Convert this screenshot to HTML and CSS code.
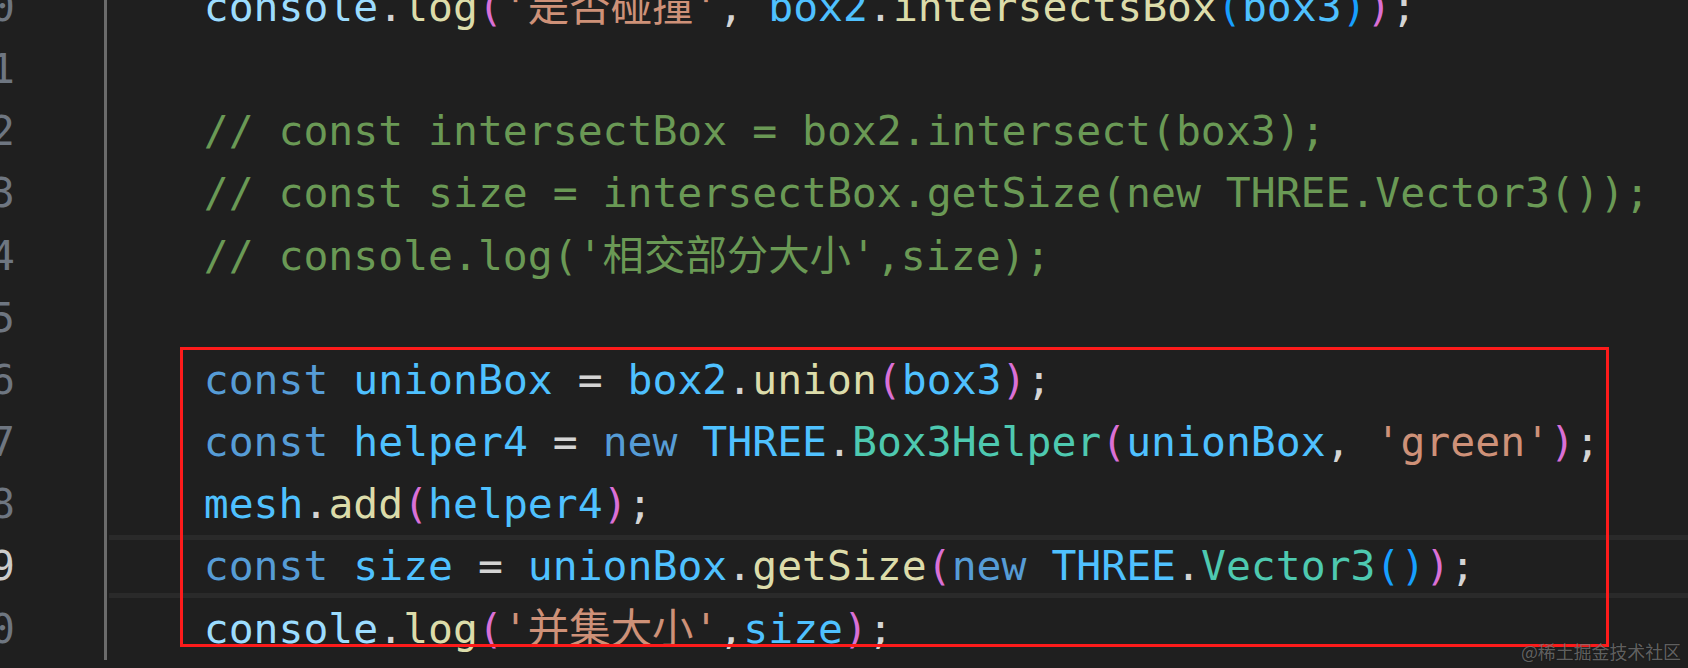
FILE: index.html
```html
<!DOCTYPE html>
<html lang="zh-CN">
<head>
<meta charset="utf-8">
<title>editor</title>
<link rel="stylesheet" href="styles.css">
</head>
<body>
<div class="editor">
  <div class="gutter">
    <div class="ln">10</div>
    <div class="ln">11</div>
    <div class="ln">12</div>
    <div class="ln">13</div>
    <div class="ln">14</div>
    <div class="ln">15</div>
    <div class="ln">16</div>
    <div class="ln">17</div>
    <div class="ln">18</div>
    <div class="ln ln-cur">19</div>
    <div class="ln">20</div>
  </div>
  <div class="code">
    <div class="line">    <span class="v">console</span><span class="p">.</span><span class="f">log</span><span class="b2">(</span><span class="s">'是否碰撞'</span><span class="p">, </span><span class="c">box2</span><span class="p">.</span><span class="f">intersectsBox</span><span class="b3">(</span><span class="c">box3</span><span class="b3">)</span><span class="b2">)</span><span class="p">;</span></div>
    <div class="line"> </div>
    <div class="line cm">    // const intersectBox = box2.intersect(box3);</div>
    <div class="line cm">    // const size = intersectBox.getSize(new THREE.Vector3());</div>
    <div class="line cm">    // console.log('相交部分大小',size);</div>
    <div class="line"> </div>
    <div class="line">    <span class="k">const</span> <span class="c">unionBox</span><span class="p"> = </span><span class="c">box2</span><span class="p">.</span><span class="f">union</span><span class="b2">(</span><span class="c">box3</span><span class="b2">)</span><span class="p">;</span></div>
    <div class="line">    <span class="k">const</span> <span class="c">helper4</span><span class="p"> = </span><span class="k">new</span> <span class="c">THREE</span><span class="p">.</span><span class="t">Box3Helper</span><span class="b2">(</span><span class="c">unionBox</span><span class="p">, </span><span class="s">'green'</span><span class="b2">)</span><span class="p">;</span></div>
    <div class="line">    <span class="c">mesh</span><span class="p">.</span><span class="f">add</span><span class="b2">(</span><span class="c">helper4</span><span class="b2">)</span><span class="p">;</span></div>
    <div class="line line-cur">    <span class="k">const</span> <span class="c">size</span><span class="p"> = </span><span class="c">unionBox</span><span class="p">.</span><span class="f">getSize</span><span class="b2">(</span><span class="k">new</span> <span class="c">THREE</span><span class="p">.</span><span class="t">Vector3</span><span class="b3">()</span><span class="b2">)</span><span class="p">;</span></div>
    <div class="line">    <span class="v">console</span><span class="p">.</span><span class="f">log</span><span class="b2">(</span><span class="s">'并集大小'</span><span class="p">,</span><span class="c">size</span><span class="b2">)</span><span class="p">;</span></div>
  </div>
</div>
<div class="mark"></div>
<div class="watermark">@稀土掘金技术社区</div>
</body>
</html>
```

FILE: styles.css
```css
html, body {
  margin: 0;
  padding: 0;
}
body {
  width: 1688px;
  height: 668px;
  overflow: hidden;
  background: #1f1f1f;
  position: relative;
  font-family: "DejaVu Sans Mono", "Noto Sans CJK SC", monospace;
  font-size: 41.42px;
}
.editor {
  display: flex;
  margin-top: -24px;
}
.gutter {
  width: 104px;
  flex: none;
}
.ln {
  width: 15px;
  height: 62.17px;
  line-height: 62.17px;
  display: flex;
  justify-content: flex-end;
  white-space: nowrap;
  color: #6e7681;
}
.ln-cur {
  color: #cccccc;
}
.code {
  flex: 1;
  background: linear-gradient(#6b6b6b, #6b6b6b) 0 0 / 3px 100% no-repeat;
}
.line {
  height: 62.17px;
  line-height: 62.17px;
  white-space: pre;
  color: #d4d4d4;
}
.line-cur {
  background:
    linear-gradient(#2a2a2a, #2a2a2a) 5px 0 / 100% 5px no-repeat,
    linear-gradient(#2a2a2a, #2a2a2a) 5px 100% / 100% 5px no-repeat;
}
.cm { color: #6a9955; }
.k { color: #569cd6; }
.v { color: #9cdcfe; }
.c { color: #4fc1ff; }
.f { color: #dcdcaa; }
.t { color: #4ec9b0; }
.s { color: #ce9178; }
.p { color: #d4d4d4; }
.b2 { color: #da70d6; }
.b3 { color: #179fff; }
.mark {
  position: absolute;
  left: 180px;
  top: 347px;
  width: 1429px;
  height: 300px;
  box-sizing: border-box;
  border: 3.5px solid #fd1b1b;
}
.watermark {
  position: absolute;
  right: 7px;
  bottom: 7px;
  font-family: "Noto Sans CJK SC", sans-serif;
  font-size: 17.9px;
  line-height: 20px;
  color: rgba(200, 200, 200, 0.45);
  text-shadow: 0 0 1px rgba(0, 0, 0, 0.6);
}
```
